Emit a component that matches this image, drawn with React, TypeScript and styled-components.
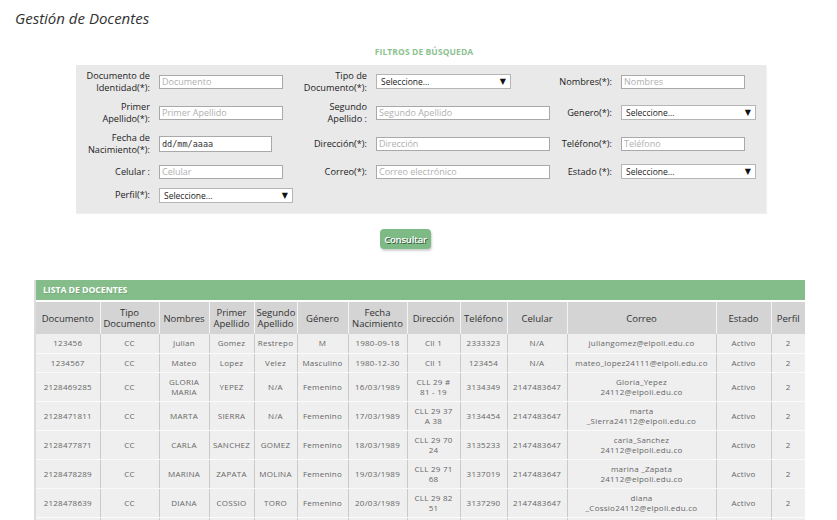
import React from "react";
import styled, { createGlobalStyle } from "styled-components";

const Global = createGlobalStyle`
  html, body { margin: 0; padding: 0; background: #ffffff; }
  body { font-family: "Open Sans", "Noto Sans", sans-serif; color: #333; }
  * { box-sizing: border-box; }
`;

const Page = styled.div`
  width: 837px;
  height: 520px;
  overflow: hidden;
  padding-top: 8px;
`;

const Title = styled.h1`
  margin: 0 0 0 15px;
  font-size: 15px;
  line-height: 20px;
  font-weight: normal;
  font-style: italic;
  color: #333;
`;

const FilterSection = styled.section`
  width: 690px;
  margin: 19px 0 0 76px;
`;

const FilterHeading = styled.div`
  text-align: center;
  padding-left: 6px;
  font-size: 8.5px;
  line-height: 10px;
  font-weight: bold;
  color: #8cc28f;
  letter-spacing: 0.1px;
`;

const FilterBox = styled.div`
  margin-top: 8px;
  height: 148px;
  background: #e9e9e9;
  box-shadow: 1px 1px 1px rgba(0, 0, 0, 0.06);
  padding-top: 1px;
  display: grid;
  grid-template-columns: 74px 134px 65px 174px 53px 135px;
  grid-auto-rows: auto;
  align-content: start;
  column-gap: 9px;
  align-items: center;
`;

const Label = styled.div<{ $h: number }>`
  display: flex;
  justify-content: flex-end;
  align-items: center;
  height: ${(p) => p.$h}px;
  font-size: 9.2px;
  line-height: 11.5px;
  color: #222;
  white-space: nowrap;
  text-align: right;
`;

const LabelText = styled.span`
  display: block;
`;

const FieldCell = styled.div`
  display: flex;
  align-items: center;
`;

const TextField = styled.input<{ $w: number }>`
  width: ${(p) => p.$w}px;
  height: 14px;
  border: 1px solid #a9a9a9;
  background: #fff;
  padding: 0 2px;
  font-family: "Open Sans", sans-serif;
  font-size: 9px;
  color: #333;
  outline: none;
  &::placeholder { color: #b0b0b0; }
`;

const DateField = styled.input`
  width: 113px;
  height: 16px;
  border: 1px solid #a9a9a9;
  background: #fff;
  padding: 0 2px;
  font-family: "DejaVu Sans Mono", monospace;
  font-size: 8.5px;
  color: #333;
  outline: none;
`;

const SelectBox = styled.div<{ $w: number }>`
  width: ${(p) => p.$w}px;
  height: 15px;
  border: 1px solid #b5b5b5;
  background: #fff;
  display: flex;
  align-items: center;
  justify-content: space-between;
  padding: 0 4px 0 4px;
  font-size: 8.5px;
  color: #222;
`;

const Arrow = styled.span`
  font-size: 8px;
  color: #111;
  font-family: "DejaVu Sans", sans-serif;
`;

const ButtonRow = styled.div`
  display: flex;
  padding-left: 380px;
  margin-top: 16px;
`;

const Button = styled.button`
  width: 51px;
  height: 20px;
  border: none;
  border-radius: 4px;
  background: #7eba86;
  color: #fff;
  font-family: "Open Sans", sans-serif;
  font-size: 9.5px;
  font-weight: 600;
  text-shadow: 1px 1px 0 rgba(0, 0, 0, 0.55);
  box-shadow: 1px 2px 2px rgba(0, 0, 0, 0.18);
  padding: 0;
  letter-spacing: -0.2px;
`;

const ListSection = styled.section`
  margin: 31px 0 0 34px;
  width: 771px;
  border-left: 2px solid #dcdcdc;
`;

const ListBar = styled.div`
  height: 20px;
  background: #84bd8a;
  color: #fff;
  font-size: 8.8px;
  font-weight: bold;
  line-height: 20px;
  padding-left: 7px;
  text-shadow: 1px 1px 0 rgba(0, 0, 0, 0.12);
  letter-spacing: -0.1px;
`;

const Table = styled.table`
  margin-top: 2px;
  width: 769px;
  border-collapse: collapse;
  table-layout: fixed;
`;

const Th = styled.th`
  background: #d4d4d4;
  border-right: 1px solid #f4f4f4;
  height: 32px;
  padding: 0 2px;
  font-size: 9.5px;
  line-height: 11px;
  font-weight: normal;
  color: #333;
  text-align: center;
  white-space: pre-line;
  &:last-child { border-right: none; }
`;

const Td = styled.td`
  background: #efefef;
  border-right: 1px solid #c9c9c9;
  border-bottom: 1px solid #fafafa;
  padding: 4px 2px;
  height: 19px;
  font-size: 8px;
  line-height: 10px;
  color: #666;
  text-align: center;
  white-space: pre-line;
  vertical-align: middle;
  letter-spacing: 0.25px;
  &:last-child { border-right: none; }
`;

const colWidths = [64, 59, 50, 45, 43, 51, 59, 53, 47, 60, 149, 55, 34];
const headers = [
  "Documento",
  "Tipo\nDocumento",
  "Nombres",
  "Primer\nApellido",
  "Segundo\nApellido",
  "Género",
  "Fecha\nNacimiento",
  "Dirección",
  "Teléfono",
  "Celular",
  "Correo",
  "Estado",
  "Perfil",
];

const rows: string[][] = [
  ["123456", "CC", "Julian", "Gomez", "Restrepo", "M", "1980-09-18", "Cll 1", "2333323", "N/A", "juliangomez@elpoli.edu.co", "Activo", "2"],
  ["1234567", "CC", "Mateo", "Lopez", "Velez", "Masculino", "1980-12-30", "Cll 1", "123454", "N/A", "mateo_lopez24111@elpoli.edu.co", "Activo", "2"],
  ["2128469285", "CC", "GLORIA\nMARIA", "YEPEZ", "N/A", "Femenino", "16/03/1989", "CLL 29 #\n81 - 19", "3134349", "2147483647", "Gloria_Yepez\n24112@elpoli.edu.co", "Activo", "2"],
  ["2128471811", "CC", "MARTA", "SIERRA", "N/A", "Femenino", "17/03/1989", "CLL 29 37\nA 38", "3134454", "2147483647", "marta\n_Sierra24112@elpoli.edu.co", "Activo", "2"],
  ["2128477871", "CC", "CARLA", "SANCHEZ", "GOMEZ", "Femenino", "18/03/1989", "CLL 29 70\n24", "3135233", "2147483647", "carla_Sanchez\n24112@elpoli.edu.co", "Activo", "2"],
  ["2128478289", "CC", "MARINA", "ZAPATA", "MOLINA", "Femenino", "19/03/1989", "CLL 29 71\n68", "3137019", "2147483647", "marina _Zapata\n24112@elpoli.edu.co", "Activo", "2"],
  ["2128478639", "CC", "DIANA", "COSSIO", "TORO", "Femenino", "20/03/1989", "CLL 29 82\n51", "3137290", "2147483647", "diana\n_Cossio24112@elpoli.edu.co", "Activo", "2"],
  ["", "", "", "", "", "", "", "", "", "", "", "", ""],
];

type Field =
  | { kind: "text"; w: number; ph: string }
  | { kind: "select"; w: number }
  | { kind: "date" }
  | { kind: "none" };

type Cell = { label: string[]; field: Field };

const filterRows: { h: number; cells: Cell[] }[] = [
  {
    h: 31,
    cells: [
      { label: ["Documento de", "Identidad(*):"], field: { kind: "text", w: 124, ph: "Documento" } },
      { label: ["Tipo de", "Documento(*):"], field: { kind: "select", w: 135 } },
      { label: ["Nombres(*):"], field: { kind: "text", w: 124, ph: "Nombres" } },
    ],
  },
  {
    h: 31,
    cells: [
      { label: ["Primer", "Apellido(*):"], field: { kind: "text", w: 124, ph: "Primer Apellido" } },
      { label: ["Segundo", "Apellido :"], field: { kind: "text", w: 174, ph: "Segundo Apellido" } },
      { label: ["Genero(*):"], field: { kind: "select", w: 135 } },
    ],
  },
  {
    h: 31,
    cells: [
      { label: ["Fecha de", "Nacimiento(*):"], field: { kind: "date" } },
      { label: ["Dirección(*):"], field: { kind: "text", w: 174, ph: "Dirección" } },
      { label: ["Teléfono(*):"], field: { kind: "text", w: 124, ph: "Teléfono" } },
    ],
  },
  {
    h: 25,
    cells: [
      { label: ["Celular :"], field: { kind: "text", w: 124, ph: "Celular" } },
      { label: ["Correo(*):"], field: { kind: "text", w: 174, ph: "Correo electrónico" } },
      { label: ["Estado (*):"], field: { kind: "select", w: 135 } },
    ],
  },
  {
    h: 22,
    cells: [
      { label: ["Perfil(*):"], field: { kind: "select", w: 135 } },
      { label: [], field: { kind: "none" } },
      { label: [], field: { kind: "none" } },
    ],
  },
];

function renderField(f: Field) {
  switch (f.kind) {
    case "text":
      return <TextField $w={f.w} placeholder={f.ph} readOnly />;
    case "select":
      return (
        <SelectBox $w={f.w}>
          <span>Seleccione...</span>
          <Arrow>▼</Arrow>
        </SelectBox>
      );
    case "date":
      return <DateField value="dd/mm/aaaa" readOnly />;
    default:
      return null;
  }
}

export default function App() {
  return (
    <Page>
      <Global />
      <Title>Gestión de Docentes</Title>
      <FilterSection>
        <FilterHeading>FILTROS DE BÚSQUEDA</FilterHeading>
        <FilterBox>
          {filterRows.map((r, ri) =>
            r.cells.map((c, ci) => (
              <React.Fragment key={`${ri}-${ci}`}>
                <Label $h={r.h}>
                  <div>
                    {c.label.map((l, li) => (
                      <LabelText key={li}>{l}</LabelText>
                    ))}
                  </div>
                </Label>
                <FieldCell>{renderField(c.field)}</FieldCell>
              </React.Fragment>
            ))
          )}
        </FilterBox>
      </FilterSection>
      <ButtonRow>
        <Button>Consultar</Button>
      </ButtonRow>
      <ListSection>
        <ListBar>LISTA DE DOCENTES</ListBar>
        <Table>
          <colgroup>
            {colWidths.map((w, i) => (
              <col key={i} style={{ width: w }} />
            ))}
          </colgroup>
          <thead>
            <tr>
              {headers.map((h) => (
                <Th key={h}>{h}</Th>
              ))}
            </tr>
          </thead>
          <tbody>
            {rows.map((r, i) => (
              <tr key={i}>
                {r.map((c, j) => (
                  <Td key={j}>{c}</Td>
                ))}
              </tr>
            ))}
          </tbody>
        </Table>
      </ListSection>
    </Page>
  );
}
